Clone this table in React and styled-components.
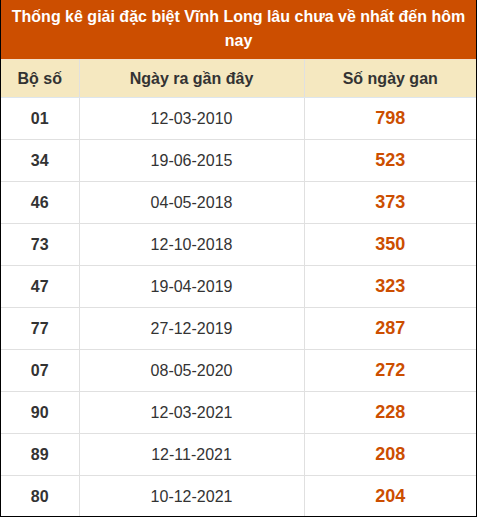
import React from "react";
import styled, { createGlobalStyle } from "styled-components";

const Global = createGlobalStyle`
  html, body { margin: 0; padding: 0; background: #fff; }
  body { font-family: "Liberation Sans", Arial, sans-serif; }
`;

const Frame = styled.div`
  width: 477px;
  height: 517px;
  box-sizing: border-box;
  border: 1px solid #000;
  border-top: none;
  overflow: hidden;
`;

const Table = styled.table`
  width: 100%;
  border-collapse: collapse;
  table-layout: fixed;
`;

const Title = styled.th`
  background: #cc4e00;
  color: #fff;
  font-size: 16px;
  font-weight: bold;
  line-height: 24px;
  padding: 5px 8px 6px;
  text-align: center;
`;

const HeadCell = styled.th`
  background: #f5e8c0;
  color: #333;
  font-size: 16px;
  font-weight: bold;
  height: 37px;
  padding: 0;
  text-align: center;
  border: 1px solid #e0e0e0;
  border-top: 1px solid #f5e0c8;
  border-bottom: 1px solid #dde6ee;
  &:first-child { border-left: none; }
  &:last-child { border-right: none; }
`;

const Cell = styled.td`
  height: 41px;
  padding: 0;
  text-align: center;
  border: 1px solid #e0e0e0;
  font-size: ${(p) => (p.$gan ? "18px" : "16px")};
  font-weight: ${(p) => (p.$bold ? "bold" : "normal")};
  color: ${(p) => (p.$gan ? "#cc4e00" : "#333")};
  &:first-child { border-left: none; }
  &:last-child { border-right: none; }
`;

const rows = [
  ["01", "12-03-2010", "798"],
  ["34", "19-06-2015", "523"],
  ["46", "04-05-2018", "373"],
  ["73", "12-10-2018", "350"],
  ["47", "19-04-2019", "323"],
  ["77", "27-12-2019", "287"],
  ["07", "08-05-2020", "272"],
  ["90", "12-03-2021", "228"],
  ["89", "12-11-2021", "208"],
  ["80", "10-12-2021", "204"],
];

export default function App() {
  return (
    <>
      <Global />
      <Frame>
        <Table>
          <colgroup>
            <col style={{ width: 78 }} />
            <col style={{ width: 225 }} />
            <col />
          </colgroup>
          <thead>
            <tr>
              <Title colSpan={3}>
                Thống kê giải đặc biệt Vĩnh Long lâu chưa về nhất đến hôm nay
              </Title>
            </tr>
            <tr>
              <HeadCell>Bộ số</HeadCell>
              <HeadCell>Ngày ra gần đây</HeadCell>
              <HeadCell>Số ngày gan</HeadCell>
            </tr>
          </thead>
          <tbody>
            {rows.map((r) => (
              <tr key={r[0]}>
                <Cell $bold>{r[0]}</Cell>
                <Cell>{r[1]}</Cell>
                <Cell $bold $gan>{r[2]}</Cell>
              </tr>
            ))}
          </tbody>
        </Table>
      </Frame>
    </>
  );
}
